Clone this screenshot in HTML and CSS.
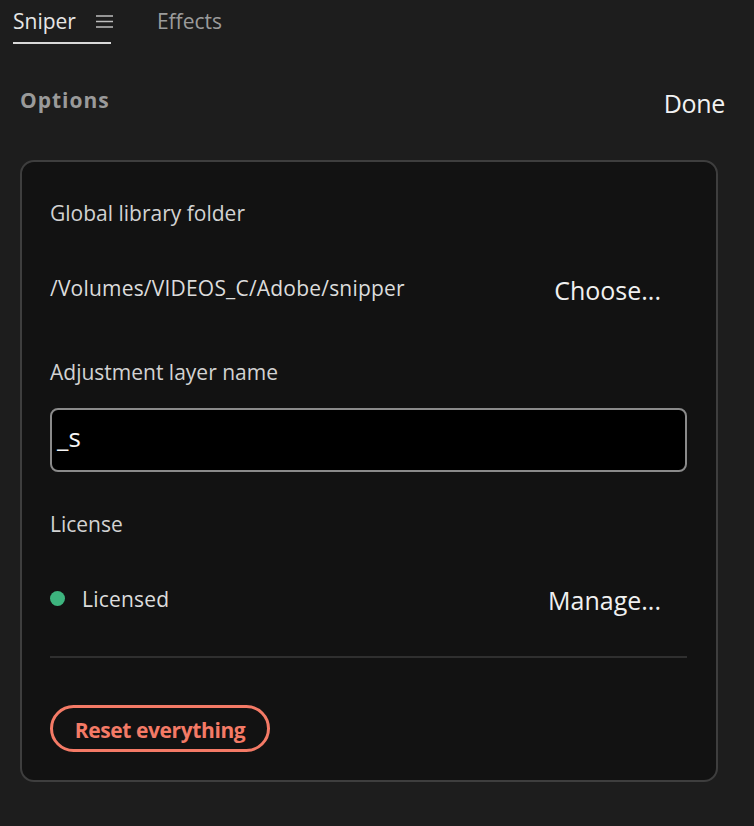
FILE: index.html
```html
<!DOCTYPE html>
<html>
<head>
<meta charset="utf-8">
<link rel="stylesheet" href="styles.css">
</head>
<body>
<div class="tabs">
  <div class="tab active">
    <span class="tab-label">Sniper</span>
    <svg class="menu-icon" width="17" height="13" viewBox="0 0 17 13"><path d="M0 1h17M0 6.5h17M0 12h17" stroke="#bdbdbd" stroke-width="1.4" fill="none"/></svg>
  </div>
  <div class="tab"><span class="tab-label">Effects</span></div>
</div>
<div class="header">
  <h2 class="title">Options</h2>
  <button class="done">Done</button>
</div>
<div class="card">
  <div class="label first">Global library folder</div>
  <div class="row row-folder">
    <span class="value">/Volumes/VIDEOS_C/Adobe/snipper</span>
    <button class="quiet">Choose...</button>
  </div>
  <div class="label label-adj">Adjustment layer name</div>
  <div class="input">_s</div>
  <div class="label label-lic">License</div>
  <div class="row row-lic">
    <span class="status"><span class="dot"></span><span class="value">Licensed</span></span>
    <button class="quiet">Manage...</button>
  </div>
  <div class="divider"></div>
  <button class="reset">Reset everything</button>
</div>
</body>
</html>
```

FILE: styles.css
```css
html, body {
  margin: 0;
  padding: 0;
  background: #1d1d1d;
  font-family: "Open Sans", "Noto Sans", sans-serif;
  color: #d6d6d6;
}
button {
  font-family: inherit;
  background: none;
  border: none;
  cursor: pointer;
  padding: 0;
}
.tabs {
  display: flex;
  gap: 46px;
  padding: 0 0 0 13px;
  height: 44px;
}
.tab {
  display: flex;
  align-items: center;
  gap: 20px;
  height: 42px;
  font-size: 21px;
  color: #9b9b9b;
}
.tab-label { line-height: 42px; margin-top: -1px; }
.tab.active {
  color: #e6e6e6;
  border-bottom: 2px solid #d9d9d9;
}
.menu-icon { margin-top: 0; margin-right: -2px; }
.header {
  display: flex;
  justify-content: space-between;
  align-items: center;
  padding: 0 29px 0 20px;
  margin-top: 38px;
  height: 36px;
}
.title {
  margin: 0;
  font-size: 21px;
  font-weight: 700;
  color: #9a9a9a;
  letter-spacing: 1px;
}
.done {
  font-size: 25px;
  color: #f2f2f2;
  letter-spacing: -0.3px;
  margin-top: 6px;
}
.card {
  margin: 42px 36px 0 20px;
  border: 2px solid #3e3e3e;
  border-radius: 14px;
  background: #121212;
  padding: 39px 29px 28px 28px;
  display: flex;
  flex-direction: column;
  align-items: flex-start;
}
.label {
  font-size: 21px;
  line-height: 24px;
  color: #d2d2d2;
}
.row {
  align-self: stretch;
  display: flex;
  justify-content: space-between;
  align-items: center;
  height: 40px;
}
.row-folder { margin-top: 46px; }
.value {
  font-size: 21px;
  color: #dcdcdc;
  letter-spacing: 0.2px;
}
.row-folder .value { margin-top: -6px; }
.quiet {
  font-size: 25px;
  color: #f0f0f0;
  padding: 0 26px 0 10px;
}
.row-folder .quiet { margin-top: -2px; }
.label-adj { margin-top: 49px; }
.input {
  align-self: stretch;
  margin-top: 24px;
  height: 60px;
  border: 2px solid #8a8a8a;
  border-radius: 8px;
  background: #000;
  color: #f5f5f5;
  font-size: 26px;
  line-height: 54px;
  padding: 0 5px;
}
.label-lic { margin-top: 40px; }
.row-lic { margin-top: 44px; }
.status {
  display: flex;
  align-items: center;
  gap: 17px;
}
.row-lic .value { margin-top: -3px; }
.dot {
  width: 15px;
  height: 15px;
  border-radius: 50%;
  background: #3db47e;
  margin-top: -3px;
}
.divider {
  align-self: stretch;
  height: 2px;
  background: #2f2f2f;
  margin-top: 36px;
}
.reset {
  margin-top: 47px;
  height: 47px;
  width: 220px;
  border: 3px solid #f47a66;
  border-radius: 24px;
  color: #f47a66;
  font-size: 21px;
  font-weight: 700;
  letter-spacing: -0.4px;
  padding-top: 3px;
}
```
